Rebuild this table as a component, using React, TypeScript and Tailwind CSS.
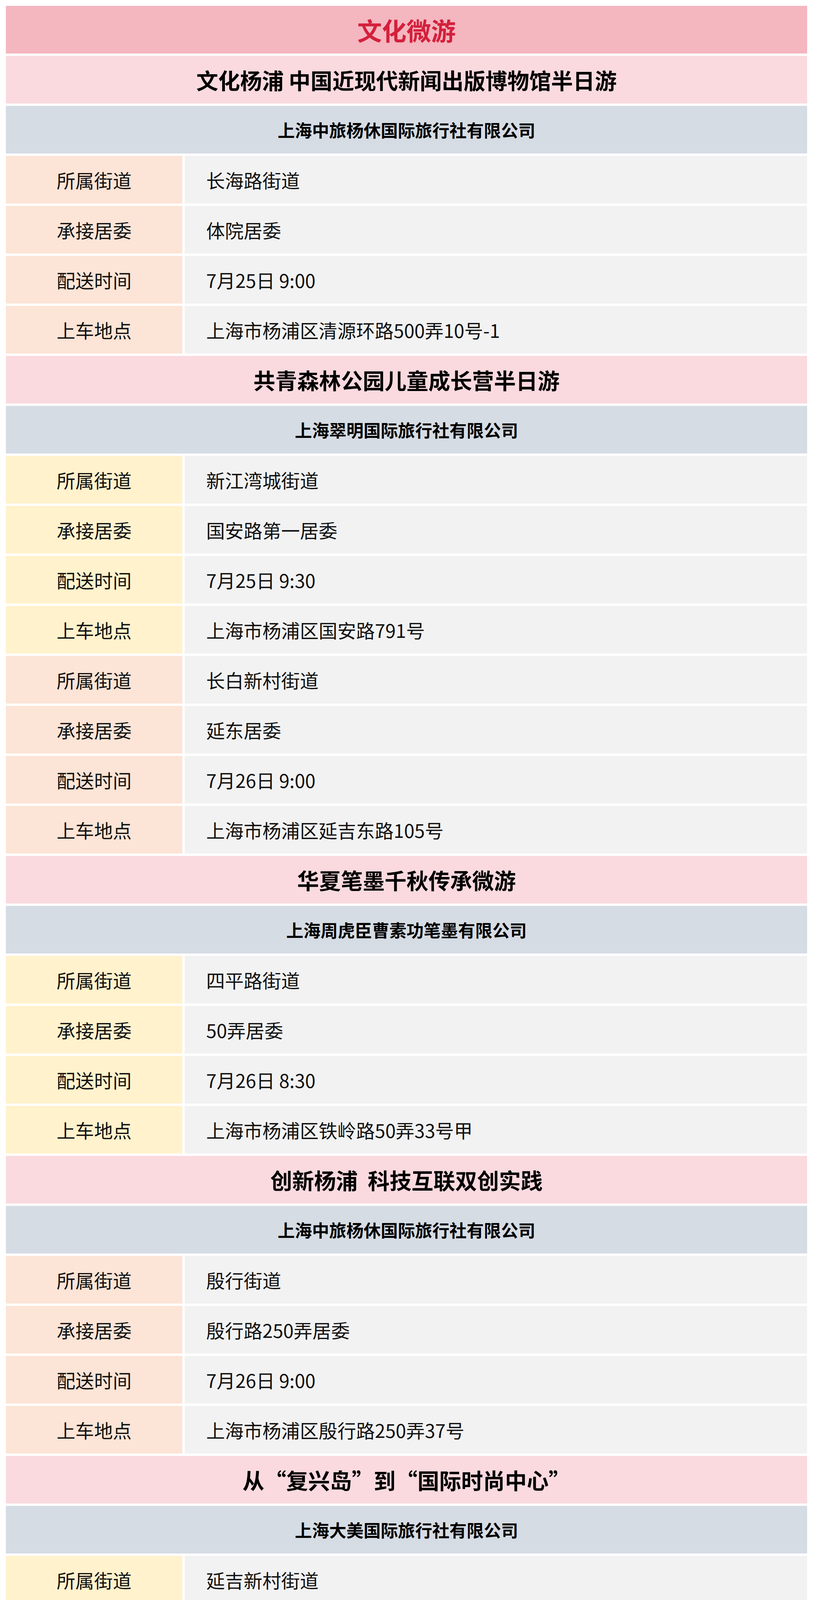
type Item = { label: string; value: string };
type Block = { tone: 'orange' | 'yellow'; items: Item[] };
type Section = { title: string; company: string; blocks: Block[] };

const rows = (street: string, committee: string, time: string, place: string): Item[] => [
  { label: '所属街道', value: street },
  { label: '承接居委', value: committee },
  { label: '配送时间', value: time },
  { label: '上车地点', value: place },
];

const sections: Section[] = [
  {
    title: '文化杨浦 中国近现代新闻出版博物馆半日游',
    company: '上海中旅杨休国际旅行社有限公司',
    blocks: [{ tone: 'orange', items: rows('长海路街道', '体院居委', '7月25日 9:00', '上海市杨浦区清源环路500弄10号-1') }],
  },
  {
    title: '共青森林公园儿童成长营半日游',
    company: '上海翠明国际旅行社有限公司',
    blocks: [
      { tone: 'yellow', items: rows('新江湾城街道', '国安路第一居委', '7月25日 9:30', '上海市杨浦区国安路791号') },
      { tone: 'orange', items: rows('长白新村街道', '延东居委', '7月26日 9:00', '上海市杨浦区延吉东路105号') },
    ],
  },
  {
    title: '华夏笔墨千秋传承微游',
    company: '上海周虎臣曹素功笔墨有限公司',
    blocks: [{ tone: 'yellow', items: rows('四平路街道', '50弄居委', '7月26日 8:30', '上海市杨浦区铁岭路50弄33号甲') }],
  },
  {
    title: '创新杨浦  科技互联双创实践',
    company: '上海中旅杨休国际旅行社有限公司',
    blocks: [{ tone: 'orange', items: rows('殷行街道', '殷行路250弄居委', '7月26日 9:00', '上海市杨浦区殷行路250弄37号') }],
  },
  {
    title: '从“复兴岛”到“国际时尚中心”',
    company: '上海大美国际旅行社有限公司',
    blocks: [{ tone: 'yellow', items: rows('延吉新村街道', '杨家浜居委', '7月26日 9:00', '上海市杨浦区延吉中路117弄38号102') }],
  },
  {
    title: '杨浦红色之旅',
    company: '上海大美国际旅行社有限公司',
    blocks: [{ tone: 'orange', items: rows('四平路街道', '鞍山一村（3）居委', '7月27日 9:30', '上海市杨浦区本溪路141弄14号甲') }],
  },
];

const font = "font-['Noto_Sans_CJK_SC','Noto_Sans',sans-serif]";

function InfoRow({ item, tone }: { item: Item; tone: 'orange' | 'yellow' }) {
  return (
    <div className="flex h-[122px] gap-[6px]">
      <div
        className={`flex w-[452px] shrink-0 items-center justify-center text-[48px] text-[#111] ${
          tone === 'orange' ? 'bg-[#fce4d6]' : 'bg-[#fff2cc]'
        }`}
      >
        {item.label}
      </div>
      <div className="flex flex-1 items-center bg-[#f2f2f2] pl-[55px] text-[48px] text-[#111]">
        {item.value}
      </div>
    </div>
  );
}

export default function App() {
  return (
    <div className={`flex min-h-screen flex-col gap-[6px] bg-white p-[15px] ${font}`}>
      {/* ---- Page title ---- */}
      <div className="flex h-[122px] items-center justify-center bg-[#f4b6bf] text-[63px] font-bold text-[#d4203c]">
        文化微游
      </div>

      {sections.map((s, i) => (
        <div key={i} className="flex flex-col gap-[6px]">
          <div className="flex h-[122px] items-center justify-center whitespace-pre bg-[#fadadf] text-[56px] font-bold text-black">
            {s.title}
          </div>
          <div className="flex h-[122px] items-center justify-center bg-[#d6dce4] text-[44px] font-bold text-black">
            {s.company}
          </div>
          {s.blocks.map((b, j) =>
            b.items.map((it, k) => <InfoRow key={`${j}-${k}`} item={it} tone={b.tone} />)
          )}
        </div>
      ))}
    </div>
  );
}
